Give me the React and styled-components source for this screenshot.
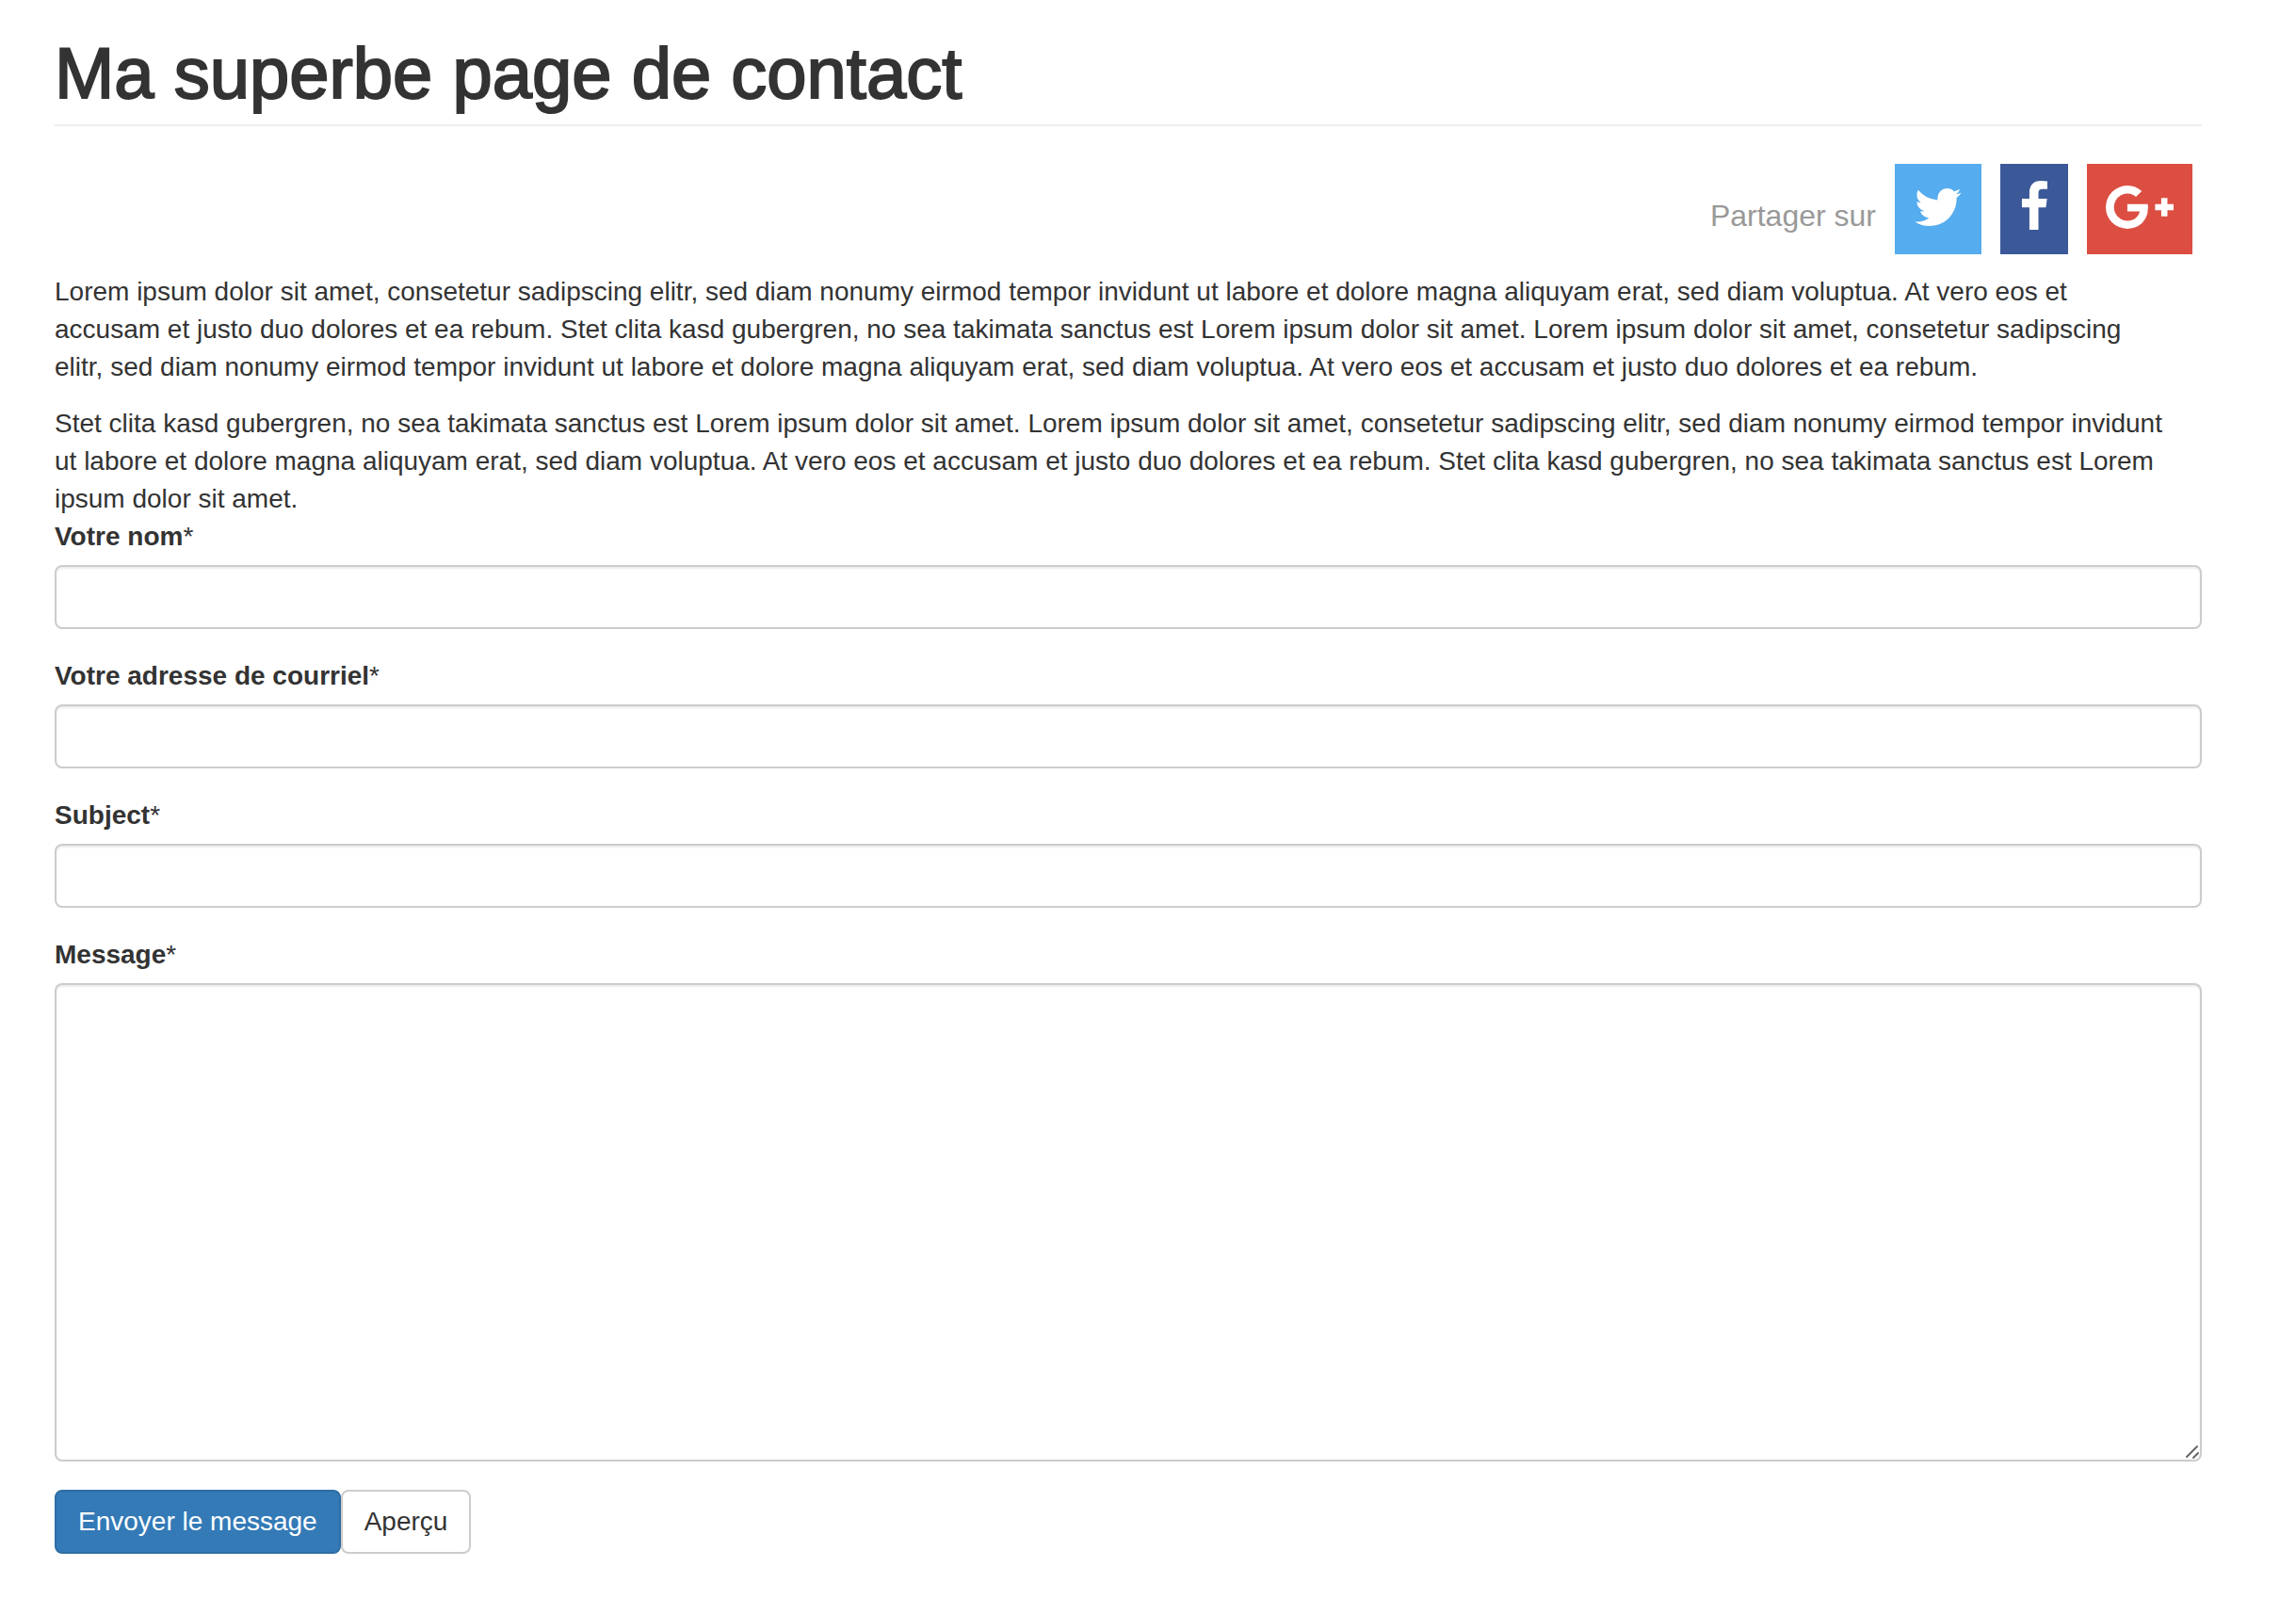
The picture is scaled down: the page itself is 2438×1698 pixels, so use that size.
import React, { useState } from "react";
import styled, { createGlobalStyle } from "styled-components";

const GlobalStyle = createGlobalStyle`
  * {
    box-sizing: border-box;
  }
  body {
    margin: 0;
    background: #fff;
    color: #333;
    font-family: "Liberation Sans", Arial, sans-serif;
    font-size: 28px;
    line-height: 40px;
  }
  input,
  textarea,
  button {
    font-family: inherit;
    font-size: inherit;
    line-height: inherit;
  }
`;

const Page = styled.main`
  padding: 38px 100px 48px 58px;
`;

const PageHeader = styled.header`
  padding-bottom: 14px;
  margin-bottom: 40px;
  border-bottom: 2px solid #eee;
`;

const Title = styled.h1`
  margin: 0;
  font-size: 76px;
  font-weight: 500;
  line-height: 80px;
  -webkit-text-stroke: 2px #333;
`;

const ShareBar = styled.div`
  display: flex;
  justify-content: flex-end;
  align-items: center;
  gap: 20px;
  padding-right: 10px;
  margin-bottom: 20px;
`;

const ShareLabel = styled.span`
  padding-top: 14px;
  font-size: 32px;
  color: #999;
`;

const ShareLink = styled.a`
  display: flex;
  padding: 18px 20px 22px;
  color: #fff;
  background: ${(props) => props.$color};
  svg {
    display: block;
    height: 56px;
    fill: currentColor;
  }
  &:hover {
    opacity: 0.9;
  }
`;

const Paragraph = styled.p`
  margin: 0 0 20px;
  padding-right: 30px;
  &:last-of-type {
    margin-bottom: 0;
  }
`;

const FormGroup = styled.div`
  margin-bottom: 30px;
`;

const Label = styled.label`
  display: block;
  margin-bottom: 10px;
  font-weight: bold;
  span {
    font-weight: normal;
  }
`;

const Input = styled.input`
  display: block;
  width: 100%;
  height: 68px;
  padding: 12px 24px;
  color: #555;
  background: #fff;
  border: 2px solid #ccc;
  border-radius: 8px;
  box-shadow: inset 0 2px 2px rgba(0, 0, 0, 0.075);
  &:focus {
    outline: 0;
    border-color: #66afe9;
  }
`;

const TextArea = styled(Input)`
  height: 508px;
  resize: vertical;
  &::-webkit-resizer {
    display: none;
  }
`;

const TextAreaBox = styled.div`
  position: relative;
`;

const Grip = styled.svg`
  position: absolute;
  right: 2px;
  bottom: 2px;
  width: 16px;
  height: 16px;
  pointer-events: none;
  stroke: #666;
  stroke-width: 2;
  stroke-linecap: round;
`;

const Button = styled.button`
  padding: 12px 23px;
  color: ${(props) => (props.$primary ? "#fff" : "#333")};
  background: ${(props) => (props.$primary ? "#337ab7" : "#fff")};
  border: 2px solid ${(props) => (props.$primary ? "#2e6da4" : "#ccc")};
  border-radius: 8px;
  cursor: pointer;
`;

const Actions = styled.div`
  display: flex;
`;

const networks = [
  {
    name: "Twitter",
    color: "#55acee",
    viewBox: "64 0 1664 1792",
    path:
      "M1684 408q-67 98-162 167 1 14 1 42 0 130-38 259.5t-115.5 248.5-184.5 210.5-258 146-323 54.5q-271 0-496-145 35 4 78 4 225 0 401-138-105-2-188-64.5t-114-159.5q33 5 61 5 43 0 85-11-112-23-185.5-111.5t-73.5-205.5v-4q68 38 146 41-66-44-105-115t-39-154q0-88 44-163 121 149 294.5 238.5t371.5 99.5q-8-38-8-74 0-134 94.5-228.5t228.5-94.5q140 0 236 102 109-21 205-78-37 115-142 178 93-10 186-50z"
  },
  {
    name: "Facebook",
    color: "#3b5998",
    viewBox: "384 0 1024 1792",
    path:
      "M1343 12v264h-157q-86 0-116 36t-30 108v189h293l-39 296h-254v759h-306v-759h-255v-296h255v-218q0-186 104-288.5t277-102.5q147 0 228 12z"
  },
  {
    name: "Google+",
    color: "#dc4e41",
    viewBox: "0 0 2304 1792",
    path:
      "M1437 913q0 208-87 370.5t-248 254-369 91.5q-149 0-285-58t-234-156-156-234-58-285 58-285 156-234 234-156 285-58q286 0 491 192l-199 191q-117-113-292-113-123 0-227.5 62t-165.5 168.5-61 232.5 61 232.5 165.5 168.5 227.5 62q83 0 152.5-23t114.5-57.5 78.5-78.5 49-83 21.5-74h-416v-252h692q12 63 12 122zm867-122v210h-209v209h-210v-209h-209v-210h209v-209h210v209h209z"
  }
];

const fields = [
  { id: "name", label: "Votre nom", type: "text" },
  { id: "email", label: "Votre adresse de courriel", type: "email" },
  { id: "subject", label: "Subject", type: "text" }
];

export default function App() {
  const [values, setValues] = useState({ name: "", email: "", subject: "", message: "" });

  const handleChange = (event) => {
    const { name, value } = event.target;
    setValues((prev) => ({ ...prev, [name]: value }));
  };

  return (
    <>
      <GlobalStyle />
      <Page>
        <PageHeader>
          <Title>Ma superbe page de contact</Title>
        </PageHeader>
        <ShareBar>
          <ShareLabel>Partager sur</ShareLabel>
          {networks.map((network) => (
            <ShareLink
              key={network.name}
              href="#"
              aria-label={network.name}
              $color={network.color}
            >
              <svg viewBox={network.viewBox} aria-hidden="true">
                <path d={network.path} />
              </svg>
            </ShareLink>
          ))}
        </ShareBar>
        <Paragraph>
          Lorem ipsum dolor sit amet, consetetur sadipscing elitr, sed diam nonumy eirmod tempor
          invidunt ut labore et dolore magna aliquyam erat, sed diam voluptua. At vero eos et
          accusam et justo duo dolores et ea rebum. Stet clita kasd gubergren, no sea takimata
          sanctus est Lorem ipsum dolor sit amet. Lorem ipsum dolor sit amet, consetetur sadipscing
          elitr, sed diam nonumy eirmod tempor invidunt ut labore et dolore magna aliquyam erat, sed
          diam voluptua. At vero eos et accusam et justo duo dolores et ea rebum.
        </Paragraph>
        <Paragraph>
          Stet clita kasd gubergren, no sea takimata sanctus est Lorem ipsum dolor sit amet. Lorem
          ipsum dolor sit amet, consetetur sadipscing elitr, sed diam nonumy eirmod tempor invidunt
          ut labore et dolore magna aliquyam erat, sed diam voluptua. At vero eos et accusam et
          justo duo dolores et ea rebum. Stet clita kasd gubergren, no sea takimata sanctus est
          Lorem ipsum dolor sit amet.
        </Paragraph>
        <form onSubmit={(event) => event.preventDefault()}>
          {fields.map((field) => (
            <FormGroup key={field.id}>
              <Label htmlFor={field.id}>
                {field.label}
                <span>*</span>
              </Label>
              <Input
                id={field.id}
                name={field.id}
                type={field.type}
                value={values[field.id]}
                onChange={handleChange}
              />
            </FormGroup>
          ))}
          <FormGroup>
            <Label htmlFor="message">
              Message<span>*</span>
            </Label>
            <TextAreaBox>
              <TextArea
                as="textarea"
                id="message"
                name="message"
                value={values.message}
                onChange={handleChange}
              />
              <Grip viewBox="0 0 16 16" aria-hidden="true">
                <path d="M2 13L13 2M9 14L14 9" />
              </Grip>
            </TextAreaBox>
          </FormGroup>
          <Actions>
            <Button type="submit" $primary>
              Envoyer le message
            </Button>
            <Button type="button">Aperçu</Button>
          </Actions>
        </form>
      </Page>
    </>
  );
}
